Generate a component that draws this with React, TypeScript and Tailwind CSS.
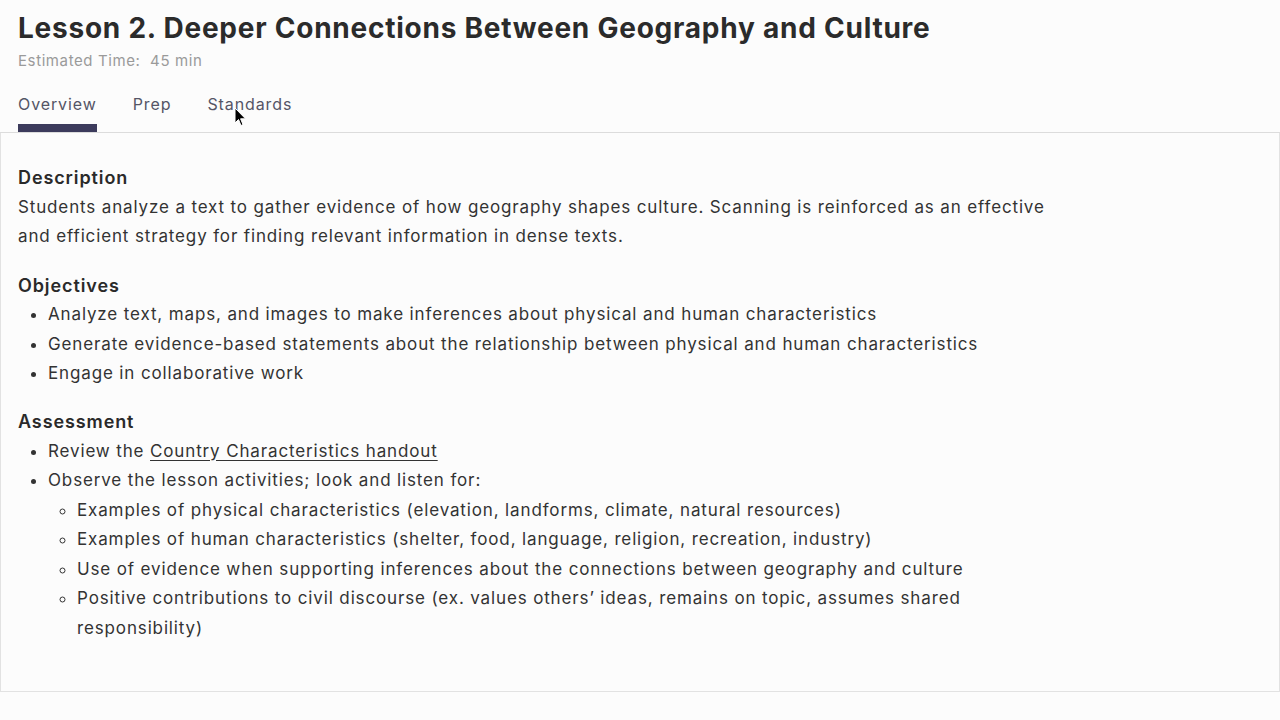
import React from "react";

export default function App() {
  const font = { fontFamily: "Inter, 'Noto Sans', sans-serif" };
  return (
    <div className="relative w-[1280px] h-[720px] overflow-hidden bg-[#fcfcfc] text-[#333333]" style={font}>
      <div className="px-[18px] pt-[10px]">
        <h1 className="text-[28px] leading-[36px] font-bold text-[#2b2b2b] tracking-[0.76px]">
          Lesson 2. Deeper Connections Between Geography and Culture
        </h1>
        <div className="mt-[5px] text-[15px] leading-[20px] text-[#9a9a9a] tracking-[0.6px]">Estimated Time:&nbsp; 45 min</div>
      </div>
      <div className="mt-[22px] flex gap-[36px] px-[18px] border-b border-[#dcdcdc] text-[16px] text-[#555566] tracking-[0.9px]">
        <div className="flex flex-col">
          <span className="leading-[22px]">Overview</span>
          <span className="mt-[9px] h-[8px] bg-[#3c3b5c]" />
        </div>
        <span className="leading-[22px]">Prep</span>
        <span className="leading-[22px]">Standards</span>
      </div>
      <div className="h-[559px] border-l border-r border-b border-[#e2e2e2] px-[17px] pt-[30px] text-[17px] leading-[29.5px] tracking-[0.86px]">
        <div className="max-w-[1032px]">
          <h2 className="text-[18px] leading-[29.5px] font-semibold text-[#2a2a2a] tracking-[0.9px]">Description</h2>
          <p>
            Students analyze a text to gather evidence of how geography shapes culture. Scanning is reinforced as an effective and efficient strategy for finding relevant information in dense texts.
          </p>
          <h2 className="mt-[19px] text-[18px] leading-[29.5px] font-semibold text-[#2a2a2a] tracking-[0.9px]">Objectives</h2>
          <ul className="list-disc pl-[30px]">
            <li>Analyze text, maps, and images to make inferences about physical and human characteristics</li>
            <li>Generate evidence-based statements about the relationship between physical and human characteristics</li>
            <li>Engage in collaborative work</li>
          </ul>
          <h2 className="mt-[18.5px] text-[18px] leading-[29.5px] font-semibold text-[#2a2a2a] tracking-[0.9px]">Assessment</h2>
          <ul className="list-disc pl-[30px]">
            <li>
              Review the <span className="underline underline-offset-[3px]">Country Characteristics handout</span>
            </li>
            <li>
              Observe the lesson activities; look and listen for:
              <ul className="list-[circle] pl-[29px]">
                <li>Examples of physical characteristics (elevation, landforms, climate, natural resources)</li>
                <li>Examples of human characteristics (shelter, food, language, religion, recreation, industry)</li>
                <li>Use of evidence when supporting inferences about the connections between geography and culture</li>
                <li>Positive contributions to civil discourse (ex. values others’ ideas, remains on topic, assumes shared responsibility)</li>
              </ul>
            </li>
          </ul>
        </div>
      </div>
      <svg className="absolute left-[234px] top-[107px]" width="13" height="21" viewBox="0 0 13 21">
        <path d="M1 1 L1 16 L4.5 12.5 L7 18.5 L9 17.6 L6.6 11.8 L11.5 11.8 Z" fill="#000" stroke="#fff" strokeWidth="1" />
      </svg>
    </div>
  );
}
